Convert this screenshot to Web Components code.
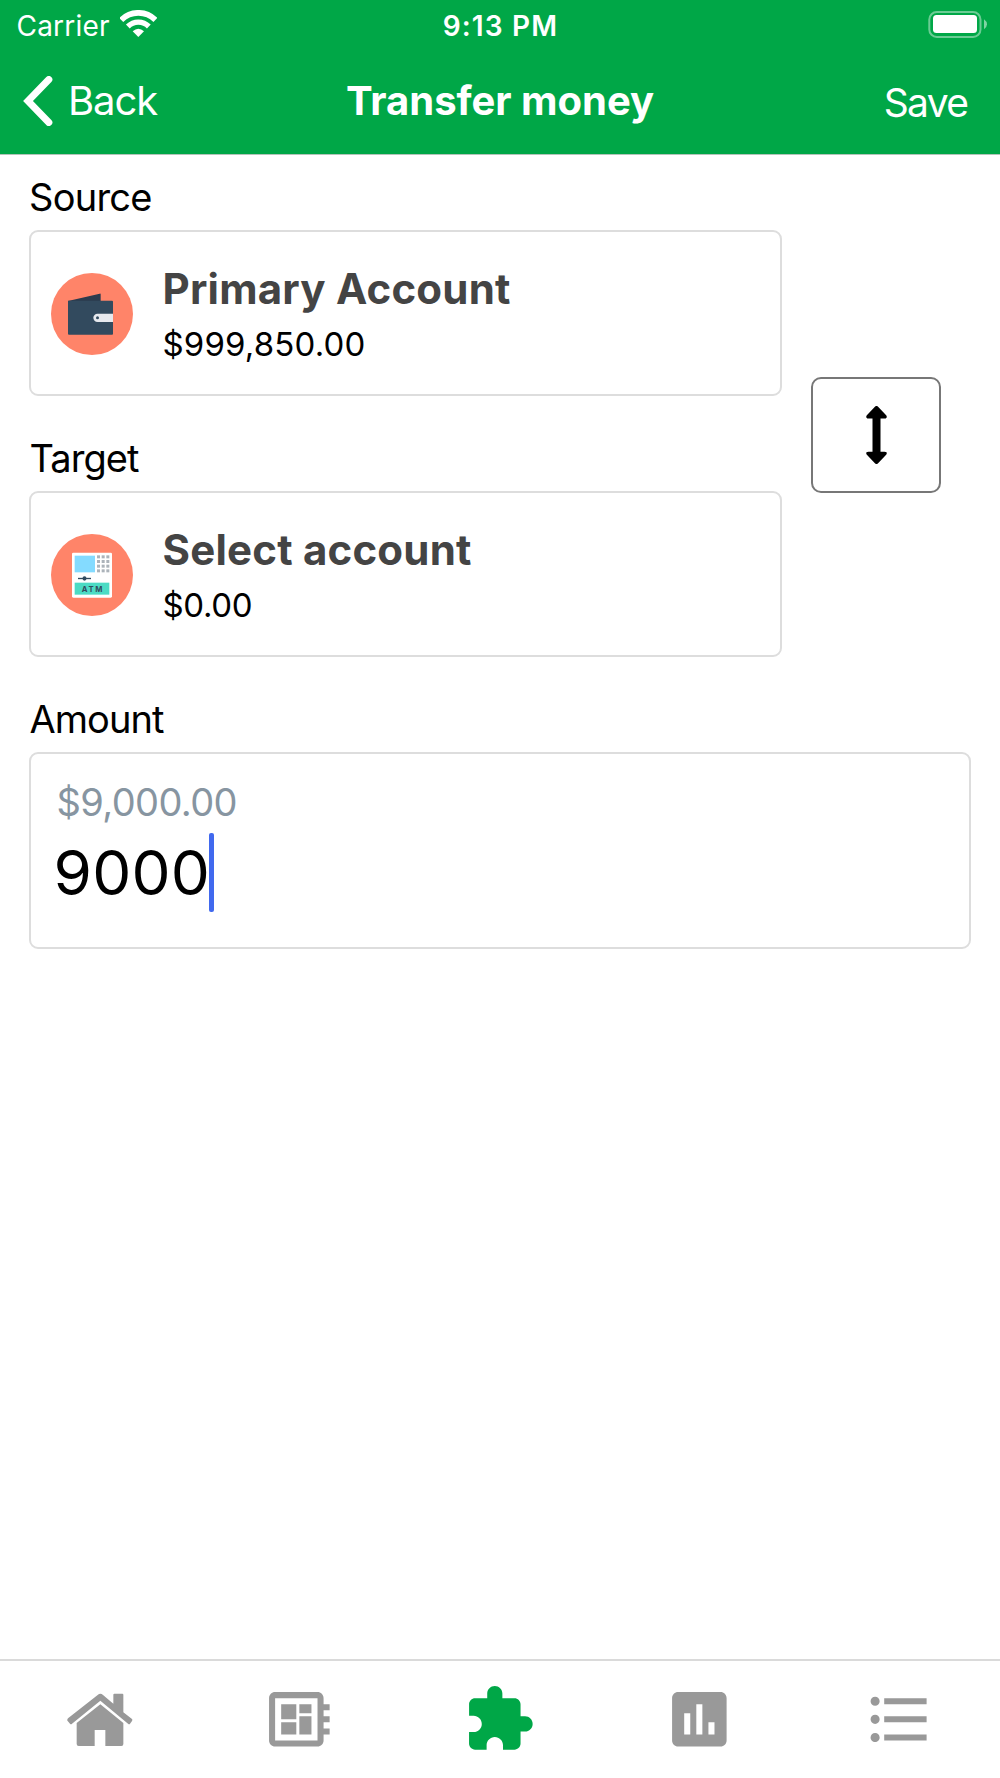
<!DOCTYPE html>
<html lang="en">
<head>
<meta charset="utf-8">
<title>Transfer money</title>
<style>
  html, body { margin: 0; height: 100%; background: #fff; }
  body { font-family: Inter, "Liberation Sans", sans-serif; color: #000; }
</style>
</head>
<body>
<transfer-screen></transfer-screen>

<script>
class BaseElement extends HTMLElement {
  constructor() {
    super();
    this.attachShadow({ mode: 'open' });
  }
  connectedCallback() {
    this.shadowRoot.innerHTML = this.render();
  }
}

customElements.define('status-bar', class extends BaseElement {
  render() {
    return `
    <style>
      :host { display: grid; grid-template-columns: 1fr auto 1fr; height: 51px; font-size: 28px; line-height: 52px; color: #fff; }
      .left { display: flex; padding-left: 16.5px; gap: 10.5px; letter-spacing: .21px; }
      .left svg { margin-top: 10px; }
      .time { font-weight: 600; letter-spacing: 1.18px; padding-left: 1px; }
      .right { display: flex; justify-content: flex-end; padding: 11px 13px 0 0; }
      svg { display: block; }
    </style>
    <div class="left"><span>Carrier</span>
      <svg width="37" height="27" viewBox="361 30 111 81">
        <g fill="none" stroke="#fff" stroke-width="17">
          <path d="M364.700 59.700A72.500 72.500 0 0 1 467.300 59.700"/>
          <path d="M384.500 79.500A44.500 44.500 0 0 1 447.500 79.500" stroke-width="16"/>
        </g>
        <path fill="#fff" d="M416 111L399 94Q416 79 433 94Z"/>
      </svg>
    </div>
    <div class="time">9:13 PM</div>
    <div class="right">
      <svg width="59" height="27" viewBox="0 0 59 27">
        <rect x="1.300" y="1" width="51.200" height="25" rx="7.500" fill="none" stroke="#fff" stroke-opacity=".42" stroke-width="2"/>
        <rect x="5" y="4" width="44" height="18" rx="3.500" fill="#fff"/>
        <path d="M56 8.300Q59 10.500 59 13.300T56 18.300Z" fill="#fff" fill-opacity=".5"/>
      </svg>
    </div>`;
  }
});

customElements.define('nav-bar', class extends BaseElement {
  render() {
    return `
    <style>
      :host { display: grid; grid-template-columns: 1fr auto 1fr; height: 99px; padding-bottom: 4px; border-bottom: 1px solid #b3c4b9; line-height: 99px; font-size: 40px; color: #fff; }
      .back { display: flex; align-items: center; height: 99px; padding-left: 22.5px; gap: 15.5px; letter-spacing: -1.06px; }
      .title { font-weight: 700; letter-spacing: -.03px; }
      .save { text-align: right; padding-right: 32.5px; font-size: 39px; letter-spacing: -1.6px; line-height: 103px; height: 99px; }
      svg { display: block; }
    </style>
    <div class="back">
      <svg width="30" height="50" viewBox="68 227 90 150"><path d="M145.500 237.500L83 302L145.500 366.500" fill="none" stroke="#fff" stroke-width="21" stroke-linecap="round"/></svg>
      <span>Back</span>
    </div>
    <div class="title">${this.getAttribute('heading')}</div>
    <div class="save">Save</div>`;
  }
});

customElements.define('form-field', class extends BaseElement {
  render() {
    return `
    <style>
      :host { display: block; }
      .label { height: 66px; line-height: 66px; font-size: 38px; letter-spacing: var(--label-spacing, -.95px); padding-left: var(--label-inset, 0px); }
      .box { box-sizing: border-box; border: 2px solid #ddd; border-radius: 9px; }
    </style>
    <div class="label">${this.getAttribute('label')}</div>
    <div class="box"><slot></slot></div>`;
  }
});

customElements.define('account-card', class extends BaseElement {
  render() {
    return `
    <style>
      :host { display: flex; height: 162px; padding-left: 20px; gap: 29.500px; }
      .icon { display: flex; align-items: center; padding-top: 1px; }
      .text { padding-top: 26px; }
      .name { height: 60px; line-height: 61px; font-size: 42px; font-weight: 700; color: #444; letter-spacing: .21px; white-space: nowrap; }
      .sum { height: 51px; line-height: 53px; font-size: 33px; letter-spacing: var(--sum-spacing, .16px); }
    </style>
    <div class="icon"><slot name="icon"></slot></div>
    <div class="text">
      <div class="name">${this.getAttribute('name')}</div>
      <div class="sum">${this.getAttribute('sum')}</div>
    </div>`;
  }
});

customElements.define('wallet-icon', class extends BaseElement {
  render() {
    return `
    <style>:host, svg { display: block; }</style>
    <svg width="82" height="82" viewBox="0 0 246 246">
      <circle cx="123" cy="123" r="123" fill="#ff8469"/>
      <path d="M51 84L146 62Q149 61 149 64V92H51Z" fill="#2b3b4e"/>
      <path d="M51 83H183Q186 83 186 86V182Q186 185 183 185H54Q51 185 51 182Z" fill="#324a5e"/>
      <path d="M186 122H139.500A12.500 12.500 0 0 0 139.500 147H186Z" fill="#e6e9ee"/>
      <circle cx="139.500" cy="134.500" r="4.500" fill="#324a5e"/>
    </svg>`;
  }
});

customElements.define('atm-icon', class extends BaseElement {
  render() {
    let keys = '';
    for (const y of [64, 78, 92, 106])
      for (const x of [138, 152, 166]) keys += `<rect x="${x}" y="${y}" width="9" height="9"/>`;
    return `
    <style>:host, svg { display: block; }</style>
    <svg width="82" height="82" viewBox="0 0 246 246">
      <circle cx="123" cy="123" r="123" fill="#ff8469"/>
      <rect x="63" y="56" width="120" height="135" rx="4" fill="#fff"/>
      <rect x="71" y="65" width="61" height="50" fill="#84dbff"/>
      <g fill="#acb3ba">${keys}</g>
      <rect x="81" y="131.500" width="39" height="4" fill="#324a5e"/>
      <ellipse cx="100.500" cy="133.500" rx="6" ry="6.500" fill="#324a5e"/>
      <rect x="71" y="146" width="104" height="36" fill="#4cdbc4"/>
      <text x="92.500" y="173" font-size="23" font-weight="700" fill="#324a5e" textLength="62">ATM</text>
    </svg>`;
  }
});

customElements.define('swap-button', class extends BaseElement {
  render() {
    return `
    <style>
      :host { box-sizing: border-box; display: flex; align-items: center; justify-content: center; width: 130px; height: 116px; border: 2px solid #777; border-radius: 10px; }
      svg { display: block; }
    </style>
    <svg width="21" height="58" viewBox="317.500 138 63 174">
      <path d="M345 139.500Q349 136 353 139.500L378 165.500Q381 170 379 173Q377 175.500 373 175.500H361V275H373Q377 275 379 277Q381 280 378 284L353 310.500Q349 314 345 310.500L320 284Q317 280 319 277Q321 275 325 275H337V175.500H325Q321 175.500 319 173Q317 170 320 165.500Z"/>
    </svg>`;
  }
});

customElements.define('amount-input', class extends BaseElement {
  render() {
    return `
    <style>
      :host { display: block; padding: 17px 0 35px; }
      .formatted { height: 62px; line-height: 62px; padding-left: 25.5px; font-size: 38px; letter-spacing: -.6px; color: #8795a1; }
      .entry { display: flex; height: 79px; line-height: 80px; padding-left: 22.5px; font-size: 62px; letter-spacing: .2px; }
      .caret { width: 4.500px; height: 79px; margin-left: -1px; border-radius: 2px; background: #4169ee; }
    </style>
    <div class="formatted">${this.getAttribute('formatted')}</div>
    <div class="entry"><span>${this.getAttribute('value')}</span><div class="caret"></div></div>`;
  }
});

const TAB_ICONS = {
  home: ['71 99 218 218', 'M81 210Q80 207 84 204L172 135Q180 128 188 135L219 161V134Q219 131 222 131H246Q249 131 249 134V187L274 206Q278 209 275 213L269 221Q267 224 263 221L180 152L95 221Q92 224 89 221L82 213Q80 211 81 210ZM180 163L249 219V282Q249 288 243 288H195V240H163V288H115Q109 288 109 282V219Z'],
  board: ['0 0 24 24', 'M22 9V7h-2V5c0-1.100-.9-2-2-2H4c-1.100 0-2 .9-2 2v14c0 1.100.9 2 2 2h14c1.100 0 2-.9 2-2v-2h2v-2h-2v-2h2v-2h-2V9h2zm-4 10H4V5h14v14zM6 13h5v4H6zm6-6h4v3h-4zM6 7h5v5H6zm6 4h4v6h-4z'],
  puzzle: ['0 0 24 24', 'M20.500 11H19V7c0-1.100-.9-2-2-2h-4V3.500C13 2.120 11.880 1 10.500 1S8 2.120 8 3.500V5H4c-1.100 0-1.990.9-1.990 2v3.800H3.500c1.490 0 2.700 1.210 2.700 2.700s-1.210 2.700-2.700 2.700H2V20c0 1.100.9 2 2 2h3.800v-1.500c0-1.490 1.210-2.700 2.700-2.700 1.490 0 2.700 1.210 2.700 2.700V22H17c1.100 0 2-.9 2-2v-4h1.500c1.380 0 2.500-1.120 2.500-2.500S21.880 11 20.500 11z'],
  chart: ['0 0 24 24', 'M19 3H5c-1.100 0-2 .9-2 2v14c0 1.100.9 2 2 2h14c1.100 0 2-.9 2-2V5c0-1.100-.9-2-2-2zM9 17H7v-7h2v7zm4 0h-2V7h2v10zm4 0h-2v-4h2v4z'],
  list: ['0 0 24 24', 'M4 10.500c-.83 0-1.500.67-1.500 1.500s.67 1.500 1.500 1.500 1.500-.67 1.500-1.500-.67-1.500-1.500-1.500zm0-6c-.83 0-1.500.67-1.500 1.500S3.170 7.500 4 7.500 5.500 6.830 5.500 6 4.830 4.500 4 4.500zm0 12c-.83 0-1.500.68-1.500 1.500s.68 1.500 1.500 1.500 1.500-.68 1.500-1.500-.67-1.500-1.500-1.500zM7 19h14v-2H7v2zm0-6h14v-2H7v2zm0-8v2h14V5H7z'],
};

customElements.define('tab-item', class extends BaseElement {
  render() {
    const [box, d] = TAB_ICONS[this.getAttribute('icon')];
    return `
    <style>
      :host { display: flex; align-items: center; justify-content: center; color: #999; }
      :host([active]) { color: #00a747; }
      svg { display: block; width: 72.700px; height: 72.700px; }
    </style>
    <svg viewBox="${box}"><path fill="currentColor" d="${d}"/></svg>`;
  }
});

customElements.define('tab-bar', class extends BaseElement {
  render() {
    return `
    <style>:host { display: grid; grid-template-columns: repeat(5, 1fr); height: 117px; padding-right: 1px; border-top: 2px solid #dadada; }</style>
    <slot></slot>`;
  }
});

customElements.define('transfer-screen', class extends BaseElement {
  render() {
    return `
    <style>
      :host { display: flex; flex-direction: column; height: 1778px; width: 1000px; background: #fff; }
      header { background: #00a747; }
      main { flex: 1; padding: 9px 29px 0; }
      .accounts { display: flex; align-items: center; gap: 29px; margin-bottom: 29px; }
      .pair { display: flex; flex-direction: column; gap: 29px; width: 753px; }
      swap-button { margin-top: 49px; }
      .source { --label-spacing: -.75px; }
      .target { --sum-spacing: -.36px; --label-inset: .5px; }
      .amount { --label-inset: .5px; }
    </style>
    <header>
      <status-bar></status-bar>
      <nav-bar heading="Transfer money"></nav-bar>
    </header>
    <main>
      <div class="accounts">
        <div class="pair">
          <form-field class="source" label="Source">
            <account-card name="Primary Account" sum="$999,850.00"><wallet-icon slot="icon"></wallet-icon></account-card>
          </form-field>
          <form-field class="target" label="Target">
            <account-card name="Select account" sum="$0.00"><atm-icon slot="icon"></atm-icon></account-card>
          </form-field>
        </div>
        <swap-button></swap-button>
      </div>
      <form-field class="amount" label="Amount">
        <amount-input formatted="$9,000.00" value="9000"></amount-input>
      </form-field>
    </main>
    <tab-bar>
      <tab-item icon="home"></tab-item>
      <tab-item icon="board"></tab-item>
      <tab-item icon="puzzle" active></tab-item>
      <tab-item icon="chart"></tab-item>
      <tab-item icon="list"></tab-item>
    </tab-bar>`;
  }
});
</script>
</body>
</html>
